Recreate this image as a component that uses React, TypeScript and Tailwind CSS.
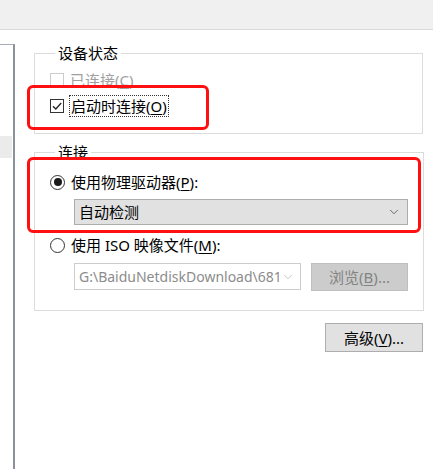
import { ChevronDown } from 'lucide-react';

function Mnemonic({ label, k, rest = '' }: { label: string; k: string; rest?: string }) {
  return (
    <span>
      {label}(<span className="underline underline-offset-2">{k}</span>){rest}
    </span>
  );
}

function Radio({ checked }: { checked?: boolean }) {
  return (
    <span className="flex h-[15px] w-[15px] shrink-0 items-center justify-center rounded-full border border-[#333333] bg-white">
      {checked && <span className="h-[8px] w-[8px] rounded-full bg-[#1a1a1a]" />}
    </span>
  );
}

export default function App() {
  return (
    <div className="relative h-[469px] w-[433px] overflow-hidden bg-white font-['Noto_Sans','Noto_Sans_CJK_SC',sans-serif] text-[15px] leading-[20px] text-black">
      <div className="h-[30px] border-b border-[#dadada] bg-[#f0f0f0]" />

      <div className="flex">
        {/* left list panel, mostly cut off */}
        <div className="mt-[14px] h-[430px] w-[15px] shrink-0 border-r-2 border-t border-[#8d9199] border-t-[#a8acb2]">
          <div className="mt-[91px] h-[22px] w-[12px] bg-[#ebebeb]" />
        </div>

        <div className="ml-[19px] w-[389px]">
          {/* 设备状态 */}
          <fieldset className="mt-[13px] border border-[#dcdcdc] pb-[17px] pl-[15px]">
            <legend className="ml-[5px] px-[3px]">设备状态</legend>
            <div className="mt-[7px] flex h-[20px] items-center gap-[6px] text-[#a0a0a0]">
              <span className="h-[14px] w-[14px] border border-[#cccccc] bg-white" />
              <Mnemonic label="已连接" k="C" />
            </div>
            <div className="mt-[6px] flex h-[20px] items-center gap-[5px]">
              <span className="flex h-[14px] w-[14px] items-center justify-center border border-[#333333] bg-white">
                <svg viewBox="0 0 12 12" className="h-[12px] w-[12px]" fill="none" stroke="#222" strokeWidth="1.3">
                  <path d="M2 6.2 L4.8 9 L10.2 3" />
                </svg>
              </span>
              <span className="border border-dotted border-[#333] px-[1px]">
                <Mnemonic label="启动时连接" k="O" />
              </span>
            </div>
          </fieldset>

          {/* 连接 */}
          <fieldset className="mt-[8px] border border-[#dcdcdc] pb-[19px] pl-[15px] pr-[15px]">
            <legend className="ml-[5px] px-[3px]">连接</legend>
            <div className="mt-[10px] flex h-[20px] items-center gap-[6px]">
              <Radio checked />
              <Mnemonic label="使用物理驱动器" k="P" rest=":" />
            </div>
            <div className="ml-[24px] mt-[7px] flex h-[26px] items-center justify-between border border-[#adadad] bg-[#e1e1e1] pl-[4px] pr-[6px]">
              <span>自动检测</span>
              <ChevronDown className="h-[14px] w-[14px] text-[#444]" strokeWidth={1.3} />
            </div>
            <div className="mt-[10px] flex h-[20px] items-center gap-[6px]">
              <Radio />
              <Mnemonic label="使用 ISO 映像文件" k="M" rest=":" />
            </div>
            <div className="ml-[24px] mt-[8px] flex gap-[10px]">
              <div className="flex h-[27px] w-[227px] items-center overflow-hidden border border-[#cccccc] bg-white pl-[4px] pr-[5px] text-[14px] text-[#8c8c8c]">
                <span className="min-w-0 flex-1 overflow-hidden whitespace-nowrap">G:\BaiduNetdiskDownload\6818</span>
                <ChevronDown className="ml-[2px] h-[14px] w-[14px] shrink-0 text-[#b5b5b5]" strokeWidth={1.3} />
              </div>
              <div className="flex h-[28px] w-[97px] items-center justify-center border border-[#bfbfbf] bg-[#cccccc] text-[#838383]">
                <Mnemonic label="浏览" k="B" rest="..." />
              </div>
            </div>
          </fieldset>

          <div className="mt-[12px] flex justify-end">
            <button className="flex h-[29px] w-[98px] items-center justify-center border border-[#adadad] bg-[#e1e1e1]">
              <Mnemonic label="高级" k="V" rest="..." />
            </button>
          </div>
        </div>
      </div>

      {/* red annotation boxes */}
      <div className="pointer-events-none absolute left-[27px] top-[85px] h-[45px] w-[182px] rounded-[6px] border-[3px] border-[#ff1010]" />
      <div className="pointer-events-none absolute left-[27px] top-[157px] h-[76px] w-[394px] rounded-[6px] border-[3px] border-[#ff1010]" />
    </div>
  );
}
